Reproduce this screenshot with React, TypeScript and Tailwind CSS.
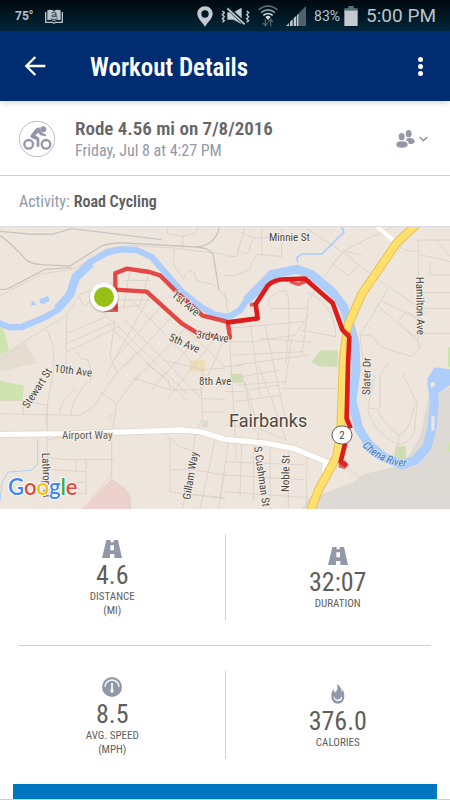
import React from 'react'

/* ---------- status bar icons ---------- */

function BookIcon() {
  return (
    <svg width="18" height="15" viewBox="0 0 54 45" fill="#b9c4ca">
      <path d="M0 9h4v29h19q4 3 8 0h19V9h4v33H32q-5 4-10 0H0z" />
      <path d="M7 4q11-5 20 2 9-7 20-2v30q-11-5-20 3-9-8-20-3z" />
      <path d="M20 12q8-6 13 0v10q2 2 4 2M33 17q-13-1-13 4 3 6 13 0M17 29q10 7 20 0" fill="none" stroke="#26404c" strokeWidth="3" />
    </svg>
  )
}

function PinIcon() {
  return (
    <svg width="16" height="21" viewBox="0 0 48 63">
      <path
        fillRule="evenodd"
        fill="#c3cbd0"
        d="M24 1C11 1 1 11 1 23c0 15 16 26 23 39 7-13 23-24 23-39C47 11 37 1 24 1zm0 12a11 11 0 1 1 0 22 11 11 0 0 1 0-22z"
      />
    </svg>
  )
}

function MuteIcon() {
  return (
    <svg width="29" height="19" viewBox="0 0 87 57" fill="none" stroke="#c3cbd0" strokeWidth="4">
      <path d="M4 12l6 5-6 6 6 6-6 6 6 6-6 5M77 12l6 5-6 6 6 6-6 6 6 6-6 5" />
      <path d="M19 16h19L62 2v50L38 38H19z" fill="#c3cbd0" stroke="none" />
      <path d="M20 2l52 50" stroke="#06202e" strokeWidth="12" />
      <path d="M19 4l52 48" strokeWidth="5" />
    </svg>
  )
}

function WifiIcon() {
  return (
    <svg width="20" height="22" viewBox="0 0 60 66" fill="none" strokeWidth="5">
      <path d="M2 14Q30-8 58 14" stroke="#5f727c" />
      <path d="M9 23Q30 6 51 23" stroke="#8b989f" />
      <path d="M16 31Q30 20 44 31" stroke="#d0d8dc" />
      <path d="M22 36q8-7 16 0l-8 9z" fill="#d0d8dc" />
      <path d="M22 42v19M15 54l7 8 7-8M38 64V44M31 51l7-8 7 8" stroke="#4e626d" strokeWidth="4" />
    </svg>
  )
}

function SignalIcon() {
  return (
    <svg width="20" height="20" viewBox="0 0 60 60">
      <path d="M36 24L60 0v60H36z" fill="#4e626d" />
      <path d="M0 60l9-9v9zM12 60V48l8-8v20zM23 60V37l8-8v31z" fill="#c3cbd0" />
      <path d="M33 60V27l4-4v37z" fill="#c3cbd0" />
    </svg>
  )
}

function BatteryIcon() {
  return (
    <svg width="14" height="20" viewBox="0 0 42 60">
      <path d="M13 0h16v7h12v11H1V7h12z" fill="#5d717b" />
      <path d="M1 14h40v46H1z" fill="#c3cbd0" />
    </svg>
  )
}

/* ---------- content icons ---------- */

function CyclistIcon() {
  return (
    <svg width="36" height="36" viewBox="0 0 108 108" className="shrink-0" fill="none" stroke="#9398a8">
      <circle cx="54" cy="54" r="53" strokeWidth="2" />
      <circle cx="29" cy="70" r="13" strokeWidth="7" />
      <circle cx="81" cy="70" r="13" strokeWidth="7" />
      <circle cx="73" cy="25" r="9" fill="#9398a8" stroke="none" />
      <path
        d="M33 46L46 28q5-8 15-9l7 15 13 7v5l-17-3-6-8-9 8 12 8v26h-8V57L39 52z"
        fill="#9398a8"
        stroke="none"
      />
    </svg>
  )
}

function FriendsIcon() {
  return (
    <svg width="19" height="18" viewBox="0 0 57 54" fill="#9398a8">
      <ellipse cx="38" cy="11" rx="9" ry="11" />
      <path d="M32 26q5-3 12-2 12 2 12 11-1 7-17 7-1-9-10-12z" />
      <ellipse cx="17" cy="20" rx="9" ry="11" />
      <path d="M18 34q17 0 17 10 0 9-17 9T1 44q0-10 17-10z" />
    </svg>
  )
}

function RoadIcon() {
  return (
    <svg width="20" height="18" viewBox="0 0 60 54">
      <path
        fillRule="evenodd"
        fill="#9398a8"
        d="M13 0h13v7h9V0h13l12 54H37V42H24v12H0zM25 16v15h11V16z"
      />
    </svg>
  )
}

function GaugeIcon() {
  return (
    <svg width="20" height="20" viewBox="0 0 60 60" fill="none" stroke="#fff">
      <circle cx="30" cy="30" r="30" fill="#9398a8" stroke="none" />
      <path d="M9 30a21 21 0 0 1 42 0" strokeWidth="4" />
      <path d="M30 18v24" strokeWidth="5" />
      <circle cx="30" cy="42" r="5" fill="#fff" stroke="none" />
    </svg>
  )
}

function FlameIcon() {
  return (
    <svg width="14" height="20" viewBox="0 0 42 60">
      <path d="M17 0q18 10 14 24 4-2 4-8 6 11 5 22-2 20-19 21Q3 58 1 38 0 25 8 14q0 9 4 12Q24 15 17 0z" fill="#9398a8" />
      <path d="M7 36q4 8 13 8 10 0 13-7 2 14-12 15Q9 51 7 36z" fill="#fff" />
      <path d="M10 34q10 6 20 0 0 13-10 13T10 34z" fill="#9398a8" />
    </svg>
  )
}

/* ---------- map ---------- */

function RouteMap() {
  return (
    <svg viewBox="0 0 450 282" className="block h-auto w-full bg-[#eee6dd]" role="img" aria-label="Fairbanks">
      {/* geometry is kept at three units per map pixel */}
      <g transform="scale(.33333)" fill="none" strokeLinejoin="round">
        {/* land areas */}
        <path d="M1350 480L1285 510 1275 560 1260 630 1225 690 1180 720 1090 742 1060 765 1010 785 925 815 905 846H1350z" fill="#dddad5" />
        <path d="M0 300l10 5 18 70-28 8z" fill="#cde4af" />
        <path d="M0 383l75-38 36 62-111 27z" fill="#e5dcd2" />
        <path d="M0 461l72 15-5 45H0z" fill="#cde4af" />
        <path d="M570 400h46v34h-49z" fill="#f0dcb4" />
        <path d="M960 370h53v50l-55-2-23-12z" fill="#cfddb5" />
        <path d="M690 441h38v26h-35z" fill="#cfddb5" />
        <path d="M1187 657h30l2 42-38-2z" fill="#cfddb5" />
        <path d="M1350 640l-12 30 12 4zM1344 360h6v60h-6z" fill="#cfe3b0" />
        <path d="M250 846l83-90q55 30 60 60v30z" fill="#edd1cc" />
        <path d="M606 580h18v20h-18z" fill="#dddad5" />

        {/* minor streets */}
        <g stroke="#dcd3c9" strokeWidth="3">
          <path d="M0 207L40 185 130 140 225 125 320 65 390 55 520 63 675 82M503 0v20l42 8 42-10 8-18M550 24l-3 45M523 68l-3 45 30 42 14-25 20 7 6 25 50 10 30 30 15 20" />
          <path d="M0 400L70 345 200 265 240 202 345 165M232 205l22 30 85-60M390 130l-20 118M447 140l-30 100M375 160h75M350 218l100 2M345 242l75-6" />
          <path d="M200 260v50l-2 106M198 320l120-50M200 350l145-65M200 375l160-78M310 258l60 55 190 187M140 306l20 50v80l-15 78-8 80M230 375l15 22h18l15 50-10 20" />
          <path d="M345 277l-15 110 20 50M450 205L320 440M490 230L350 390M520 265L375 418M560 300L405 460M600 325L455 487M640 340L500 520M400 225L640 470M370 275L600 510M440 190L675 420M330 300L560 520M675 330L600 500" />
          <path d="M0 520h67l75 15M0 560l240 5 40-25 60-90 70-75M180 560q0-40 45-75M213 563q0-45 50-98M300 494l50 36 70-95M350 530l-15 100V754M340 555l-12 20 10 10M142 535v235M70 520v45M135 690l60 8h148M228 698v35M258 698v102M150 728l108 6M160 766h98M180 800h78" />
          <path d="M333 730q0 25-85 116M330 755q60 30 62 91M140 640l60-15M400 453l110 35h90M435 408l70 50 5 27M490 400l120 28 65-5M608 430l-5 50 5 90-20 45-40 231M605 515l70 2M606 555h69M495 620l45 40 45 14M510 630v165l165 20M510 728h70l95 17M645 640l-45 206M675 725l-20 121M560 800l115 12" />
        </g>
        <g transform="translate(675 -6)" stroke="#dcd3c9" strokeWidth="3">
          <path d="M60 6L35 95 0 92M35 75l30 12M85 40l-18 45M170 10v85l-75-8-22 45-40 20H0M110 95V10M40 20l50 20 80-5M245 10l105 70 150-74M355 80l45 40-28 33-50-37 30-35M400 120l205 145M325 115l-70 105M360 80l-35 36" />
          <path d="M510 50q25 35 70 28M580 45h95M410 90l-50-12M580 45v325M635 45l40 50M580 88l95 22M615 110v40h60M580 203h95M580 250h95M580 325h95M520 290l25-30 50 25-25 52zM490 190L405 330M455 240l115 100M470 228l120 60M405 330h35l25 35 95 30 30-30-20-25M405 330l10 80 20 20" />
          <path d="M130 245q-5-40 50-48 10 0 12 60v65l-10 95M135 250h110M10 285l25 420M0 200l12 90M75 290l30 220M120 300l60 275M10 310l225-20M15 350h75l120-20 40-60M25 390l210-10M35 420l215-30M50 455l115-20M250 220q-8 100-20 170M200 340l-20 140M245 200q85 40 88 135l-105-20M100 340l165 12" />
        </g>
        <g transform="translate(675 414)" stroke="#dcd3c9" strokeWidth="3">
          <path d="M0 5l55-5M30 110l140-20M65 75l100-15M0 80h60M50 20l40 180M100 0l50 130 35 100M75 180l110 45M40 60l140-10M60 50l35 120M170 70h165M100 200v30M10 230l-25 170M50 235L45 400M85 245v160M135 250v180M190 240v190M245 270v160M0 330l245 15M0 380l250 18M0 290l240 10M0 180l90 10" />
          <path d="M450 30l-22 100q5 60 90 110 40-5 50-40l8-85-43-90M430 130l30 2q0 30 60 78 30 0 50-95M465 130V30l25-35M520 208v50" />
          <path d="M350 300l125 75M345 306l125 75" strokeWidth="2" />
          <circle cx="475" cy="379" r="6" />
        </g>

        {/* railway and larger lanes */}
        <g stroke="#c9c4c2" strokeWidth="4">
          <path d="M0 13l90 8 65 1 60-17 270 33M0 25q30 20 75 70 15 15 50 18l85 4 95-60q20-10 70-9l210 12q60-2 73-58M0 187h20l115-60 80-5M580 60q50 0 60 25l17 105" />
        </g>

        {/* water */}
        <g stroke="#adcdfb">
          <path d="M-10 285L28 301 65 300 130 273 172 250 207 205 225 150 270 106 320 77 360 67 410 69 455 90 495 136 545 194 600 238 640 262 685 270 720 250 750 205 815 140 890 124 935 140 995 190 1030 235 1050 294 1065 344" strokeWidth="19" />
          <path d="M172 246L210 203 228 150 272 108" strokeWidth="26" />
          <path d="M740 220L815 142 890 127 935 143 995 193 1030 238 1050 294 1065 350 1068 430 1056 520 1076 604 1108 654 1155 692 1205 713 1245 700 1280 662 1297 600 1303 525 1295 460 1310 435 1360 442" strokeWidth="27" />
          <path d="M1305 500l2-50 50-15v30l-45 30z" fill="#adcdfb" strokeWidth="8" />
          <path d="M893 106l-2-15 15-10h60l50-50 16-15-6-16" strokeWidth="5" />
          <path d="M113 636v76l-20 18-68 5-18 28-7 60" strokeWidth="3" />
        </g>
        <path d="M92 235l5-15 12 14zM118 217l26-10 5 13-20 12-8-3zM1300 424q8-5 20 3z" fill="#adcdfb" />
        <path d="M1290 470l12-7 4 10-12 10zM1294 568h10l-1 40-9 5z" fill="#eee6dd" />

        {/* main roads */}
        <path d="M0 622L220 620 540 609 600 614 675 637 790 648 880 664 995 712M975 750l0-40M995 712l30-50" stroke="#ddd2c2" strokeWidth="20" />
        <path d="M0 622L220 620 540 609 600 614 675 637 790 648 880 664 995 712M975 755l0-45M992 715l34-58" stroke="#fff" strokeWidth="16" />
        <path d="M1130-2l60 50" stroke="#fff" strokeWidth="12" />
        <path d="M1250-8L1190 48 1085 202 1042 300 1030 400 1022 620 1010 690 955 790 930 856" stroke="#e4c154" strokeWidth="27" />
        <path d="M1250-8L1190 48 1085 202 1042 300 1030 400 1022 620 1010 690 955 790 930 856" stroke="#ffe06d" strokeWidth="21" />

        {/* recorded route */}
        <g stroke="#e1201f" strokeOpacity=".8" strokeWidth="13">
          <path d="M346 250V139L380 125 448 135 480 145 538 203 608 266 680 284" />
          <path d="M346 188L440 194 545 289 590 317 677 335 690 331 683 284" />
        </g>
        <path
          d="M678 287L773 274 767 232 803 176Q825 155 860 157L915 155 998 228 1027 308 1048 330 1044 414 1040 574 1052 604"
          stroke="#dc1b1b"
          strokeWidth="14"
        />
        <path d="M1036 648L1022 704 1040 716" stroke="#dc1b1b" strokeWidth="14" />
        <path d="M750 235l24-8M870 164l25 8 30-12 20 22" stroke="#dc1b1b" strokeOpacity=".7" strokeWidth="10" />
        <path d="M310 232h44v23h-40zM1030 308l22 10v20l-12-10zM1016 704l18-4 12 14-12 12-18-5z" fill="#d72f30" fillOpacity=".75" />
      </g>

      <circle cx="104" cy="71" r="15" fill="#8b8178" fillOpacity=".3" />
      <circle cx="104" cy="70" r="12" fill="#97c015" stroke="#fff" strokeWidth="4" />
      <rect x="332" y="199" width="20" height="18" rx="9" fill="#fff" stroke="#5f5f5f" strokeWidth="1" />

      {/* labels */}
      <g
        fontFamily="'Roboto Condensed', Roboto, sans-serif"
        fontSize="11"
        fill="#4b4641"
        stroke="#f5f0e9"
        strokeWidth="2"
        strokeLinejoin="round"
        paintOrder="stroke"
      >
        <text x="269" y="14">Minnie St</text>
        <text transform="translate(171 69) rotate(40)">1st Ave</text>
        <text transform="translate(196 111) rotate(8)">3rd Ave</text>
        <text transform="translate(168 113) rotate(24)">5th Ave</text>
        <text transform="translate(54 145) rotate(7)">10th Ave</text>
        <text x="199" y="158">8th Ave</text>
        <text transform="translate(28 182) rotate(-57)">Stewart St</text>
        <text x="62" y="212" fill="#666058">Airport Way</text>
        <text transform="translate(42 226) rotate(88)">Lathrop St</text>
        <text transform="translate(190 273) rotate(-80)">Gillam Way</text>
        <text transform="translate(254 220) rotate(82)">S Cushman St</text>
        <text transform="translate(289 265) rotate(-89)">Noble St</text>
        <text transform="translate(370 168) rotate(-89)">Slater Dr</text>
        <text transform="translate(416 50) rotate(89)">Hamilton Ave</text>
        <path id="river" d="M362 219q20 21 50 21" fill="none" stroke="none" />
        <text fill="#4c78a8" stroke="#c4dbfb" fontStyle="italic">
          <textPath href="#river">Chena River</textPath>
        </text>
        <text x="342" y="212" textAnchor="middle" stroke="none">2</text>
      </g>
      <text
        x="229" y="200" fontSize="18" fill="#4d4940" stroke="#f5f0e9" strokeWidth="2" paintOrder="stroke"
        fontFamily="Roboto, sans-serif"
      >
        Fairbanks
      </text>
      <text
        x="8" y="268" fontSize="22" fontWeight="600" stroke="#fff" strokeWidth="2" paintOrder="stroke"
        fontFamily="Lato, sans-serif"
      >
        <tspan fill="#4285f4">G</tspan>
        <tspan fill="#ea4335">o</tspan>
        <tspan fill="#fbbc05">o</tspan>
        <tspan fill="#4285f4">g</tspan>
        <tspan fill="#34a853">l</tspan>
        <tspan fill="#ea4335">e</tspan>
      </text>
    </svg>
  )
}

/* ---------- stats ---------- */

type StatProps = {
  icon: React.ReactNode
  value: string
  label: string
  unit?: string
}

function Stat({ icon, value, label, unit }: StatProps) {
  return (
    <div className="flex flex-1 flex-col items-center justify-center pt-[3px] text-[#5e5e5e]">
      {icon}
      <p className="pt-[3px] text-[26px] leading-[29px]">{value}</p>
      <p className="text-[11px] leading-[14px]">{label}</p>
      {unit && <p className="text-[11px] leading-[14px]">{unit}</p>}
    </div>
  )
}

export default function App() {
  return (
    <div className="min-h-screen bg-white font-['Roboto_Condensed',Roboto,sans-serif]">
      {/* status bar */}
      <div className="flex h-[31px] items-center bg-linear-to-b from-[#000a10] to-[#02263a] pt-px pr-[14px] pl-[15px] font-[Roboto,sans-serif] text-[#b9c4ca]">
        <span className="mr-3 text-xs font-bold">75°</span>
        <BookIcon />
        <div className="ml-auto flex items-center gap-2">
          <PinIcon />
          <MuteIcon />
          <WifiIcon />
          <SignalIcon />
          <span className="flex items-center gap-1 text-sm">
            83%
            <BatteryIcon />
          </span>
          <span className="text-[19px]">5:00 PM</span>
        </div>
      </div>

      {/* app bar */}
      <header className="relative flex h-[70px] items-center bg-[#002d72] px-6 text-white shadow-md">
        <button aria-label="Back">
          <svg width="22" height="22" viewBox="0 0 66 66" fill="none" stroke="#fff" strokeWidth="7">
            <path d="M34 6L7 33l27 27M6 33h58" />
          </svg>
        </button>
        <h1 className="ml-11 flex-1 pt-1 text-[25px] leading-8 font-semibold">Workout Details</h1>
        <button aria-label="More options" className="flex w-3 flex-col items-center gap-[2px]">
          <span className="size-[5px] rounded-full bg-white" />
          <span className="size-[5px] rounded-full bg-white" />
          <span className="size-[5px] rounded-full bg-white" />
        </button>
      </header>

      <main>
        {/* workout summary */}
        <section className="flex h-[75px] items-center border-b border-[#cfd0da] px-[19px] pt-[2px]">
          <CyclistIcon />
          <div className="ml-5 flex-1">
            <h2 className="text-[19px] leading-6 font-semibold text-[#666]">Rode 4.56 mi on 7/8/2016</h2>
            <p className="text-base leading-5 text-[#9398a8]">Friday, Jul 8 at 4:27 PM</p>
          </div>
          <button aria-label="Sharing" className="mr-[3px] flex items-center gap-1">
            <FriendsIcon />
            <svg width="9" height="6" viewBox="0 0 27 18" fill="none" stroke="#9398a8" strokeWidth="5">
              <path d="M2 3l11 11L25 3" />
            </svg>
          </button>
        </section>

        <section className="flex h-[51px] items-center gap-1 border-b border-[#dcdce2] px-[19px] pt-[2px] text-base">
          <span className="text-[#9398a8]">Activity:</span>
          <span className="font-semibold text-[#5e5e5e]">Road Cycling</span>
        </section>

        <RouteMap />

        {/* stats grid */}
        <section>
          <div className="flex h-[136px] py-[25px]">
            <Stat icon={<RoadIcon />} value="4.6" label="DISTANCE" unit="(MI)" />
            <div className="w-px bg-[#cfd0da]" />
            <Stat icon={<RoadIcon />} value="32:07" label="DURATION" />
          </div>
          <hr className="mx-[19px] border-[#cfd0da]" />
          <div className="flex h-[138px] py-[25px]">
            <Stat icon={<GaugeIcon />} value="8.5" label="AVG. SPEED" unit="(MPH)" />
            <div className="w-px bg-[#cfd0da]" />
            <Stat icon={<FlameIcon />} value="376.0" label="CALORIES" />
          </div>
        </section>

        <div className="border-b border-[#cfd0da] px-[13px]">
          <div className="h-[15px] bg-[#0076c0]" />
        </div>
      </main>
    </div>
  )
}
